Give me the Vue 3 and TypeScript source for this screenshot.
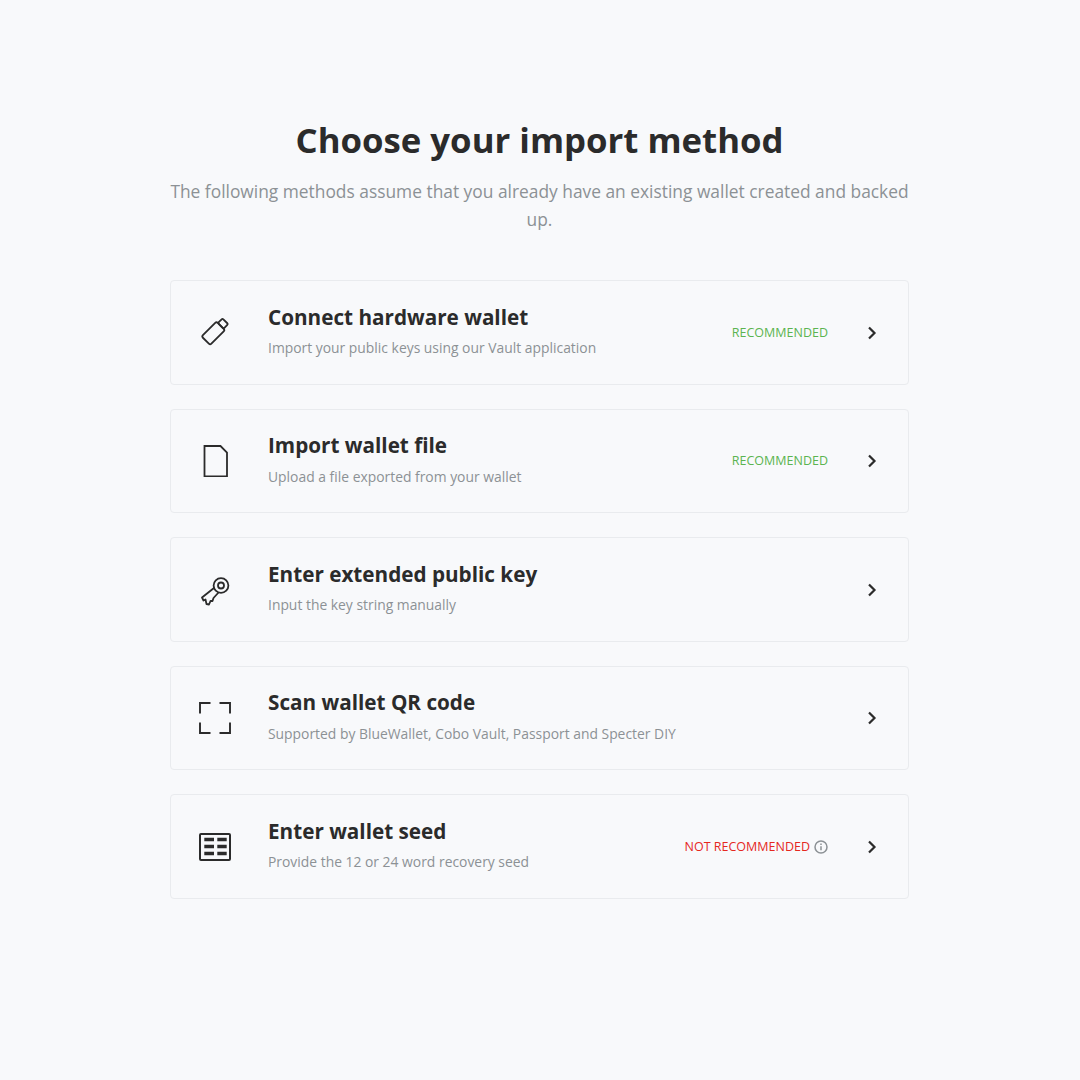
<template>
  <main class="page">
    <h1 class="title">Choose your import method</h1>
    <p class="lead">The following methods assume that you already have an existing wallet created and backed up.</p>

    <ul class="methods">
      <li v-for="m in methods" :key="m.key" class="method">
        <div class="icon">
          <svg v-if="m.key === 'hardware'" width="32" height="32" viewBox="0 0 32 32" fill="none" stroke="#2b2b2b" stroke-width="1.8" stroke-linejoin="round">
            <rect x="8.3" y="5.8" width="12" height="21" rx="1.8" transform="rotate(45 14.3 16.3)" />
            <rect x="10.3" y="-0.7" width="8" height="6.500" rx="1.2" transform="rotate(45 14.3 16.3)" />
          </svg>
          <svg v-else-if="m.key === 'file'" width="32" height="32" viewBox="0 0 32 32" fill="none" stroke="#2b2b2b" stroke-width="1.8">
            <path d="M5.500 1H21.500L28 7.500V31.500H5.500Z" />
          </svg>
          <svg v-else-if="m.key === 'key'" width="32" height="32" viewBox="0 0 32 32" fill="none" stroke="#2b2b2b" stroke-width="1.8" stroke-linejoin="round">
            <circle cx="22" cy="11.500" r="7.400" />
            <circle cx="22" cy="11.500" r="3" />
            <path d="M15.600 13.500L3 23.500 4.500 26.500 6.500 25.500 7.500 30 10 30.500 11.500 27 13.500 27 14.500 24 19.500 18.500" />
          </svg>
          <svg v-else-if="m.key === 'qr'" width="32" height="32" viewBox="0 0 32 32" fill="none" stroke="#2b2b2b" stroke-width="1.900">
            <path d="M1 11.500V1H11.500M20.500 1H31V11.500M1 20.500V31H11.500M20.500 31H31V20.500" />
          </svg>
          <svg v-else width="32" height="28" viewBox="0 0 32 28" fill="none" stroke="#2b2b2b">
            <rect x="1" y="1" width="30" height="26" rx="1" stroke-width="2" />
            <path d="M5.300 6.500h9.700M18.300 6.500h9.400M5.300 13.500h9.700M18.300 13.500h9.400M5.300 20.500h9.700M18.300 20.500h9.400" stroke-width="3.400" />
          </svg>
        </div>

        <div class="text">
          <h2 class="name">{{ m.name }}</h2>
          <p class="desc">{{ m.desc }}</p>
        </div>

        <span v-if="m.badge === 'good'" class="badge good">RECOMMENDED</span>
        <span v-else-if="m.badge === 'bad'" class="badge bad">
          NOT RECOMMENDED
          <svg class="info" width="14" height="14" viewBox="0 0 14 14" fill="none" stroke="#8c9195" stroke-width="1.500">
            <circle cx="7" cy="7" r="6" />
            <path d="M7 6.300v4" />
            <path d="M7 3.500v1.400" />
          </svg>
        </span>

        <svg class="chevron" width="10" height="14" viewBox="0 0 10 14" fill="none" stroke="#2b2b2b" stroke-width="2.200">
          <path d="M2 1.500L7.500 7 2 12.500" />
        </svg>
      </li>
    </ul>
  </main>
</template>

<script setup lang="ts">
interface Method {
  key: string
  name: string
  desc: string
  badge?: "good" | "bad"
}

const methods: Method[] = [
  { key: "hardware", name: "Connect hardware wallet", desc: "Import your public keys using our Vault application", badge: "good" },
  { key: "file", name: "Import wallet file", desc: "Upload a file exported from your wallet", badge: "good" },
  { key: "key", name: "Enter extended public key", desc: "Input the key string manually" },
  { key: "qr", name: "Scan wallet QR code", desc: "Supported by BlueWallet, Cobo Vault, Passport and Specter DIY" },
  { key: "seed", name: "Enter wallet seed", desc: "Provide the 12 or 24 word recovery seed", badge: "bad" }
]
</script>

<style>
html,
body {
  background: #f8f9fb;
}
</style>

<style scoped>
.page {
  width: 739px;
  min-height: 1080px;
  box-sizing: border-box;
  margin-left: 170px;
  padding-top: 116px;
  font-family: "Open Sans", "Liberation Sans", sans-serif;
  color: #2b2b2b;
}

.title {
  margin: 0;
  font-size: 34.750px;
  line-height: 48px;
  font-weight: 700;
  text-align: center;
}

.lead {
  margin: 13px 0 0;
  font-size: 17.380px;
  line-height: 28px;
  color: #8c9195;
  text-align: center;
}

.methods {
  list-style: none;
  margin: 47.300px 0 0;
  padding: 0;
  display: flex;
  flex-direction: column;
  gap: 24px;
}

.method {
  height: 104.500px;
  box-sizing: border-box;
  display: flex;
  align-items: center;
  padding: 0 31px 0 28px;
  border: 1px solid #e9ebee;
  border-radius: 4px;
  background: #f8f9fb;
}

.icon {
  width: 32px;
  display: flex;
  justify-content: center;
  flex: none;
}

.text {
  margin-left: 37px;
  padding-bottom: 4px;
  flex: 1;
}

.name {
  margin: 0;
  font-size: 20.700px;
  line-height: 28px;
  font-weight: 700;
}

.desc {
  margin: 7.500px 0 0;
  font-size: 13.880px;
  line-height: 20px;
  color: #8c9195;
}

.badge {
  display: flex;
  align-items: center;
  gap: 4px;
  margin-right: 39px;
  font-size: 12.500px;
  line-height: 16px;
}

.good {
  color: #5bb450;
}

.bad {
  color: #e5281f;
}

.chevron {
  flex: none;
}
</style>
